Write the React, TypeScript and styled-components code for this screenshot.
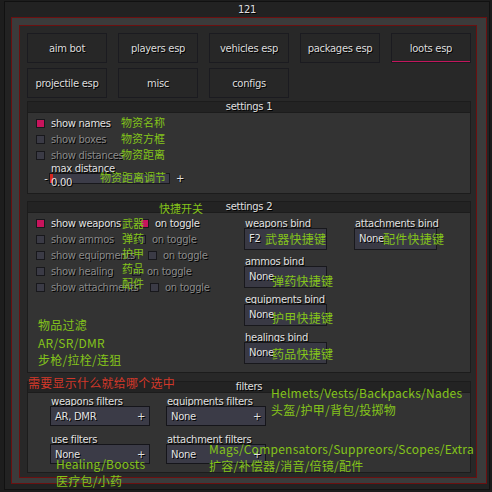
import React from "react";
import styled, { createGlobalStyle } from "styled-components";

const GREEN = "#84c41a";

const Global = createGlobalStyle`
  html, body { margin: 0; padding: 0; background: #1d1d1d; }
  body {
    font-family: "DejaVu Sans", Verdana, sans-serif;
    font-size: 10px;
    letter-spacing: -0.3px;
    color: #dedede;
  }
  * { box-sizing: border-box; }
`;

const Page = styled.div`
  position: relative;
  width: 492px;
  height: 492px;
  padding: 1px 0 0 4px;
  background: #1d1d1d;
  overflow: hidden;
`;

const Window = styled.div`
  width: 486px;
  height: 489px;
  border: 1px solid #111;
  background: #222222;
  display: flex;
  flex-direction: column;
  padding-left: 6px;
`;

const Title = styled.div`
  height: 15px;
  line-height: 15px;
  text-align: center;
  padding-right: 6px;
  color: #e0e0e0;
  text-shadow: 1px 1px 0 #000;
`;

const OuterFrame = styled.div`
  width: 476px;
  height: 467px;
  border: 1px solid #6a1010;
  background: #3b3b3b;
  padding: 7px 9px 5px 7px;
  display: flex;
`;

const InnerFrame = styled.div`
  flex: 1;
  border: 1px solid #6a1010;
  background: #282828;
  padding: 7px 5px 4px 7px;
  display: flex;
  flex-direction: column;
`;

const TabGrid = styled.div`
  display: grid;
  grid-template-columns: repeat(5, 80px);
  grid-auto-rows: 30px;
  column-gap: 11px;
  row-gap: 5px;
`;

const TabButton = styled.div<{ $active?: boolean }>`
  border: 1px solid #1b1b20;
  background: #272727;
  display: flex;
  align-items: center;
  justify-content: center;
  color: #dcdcdc;
  text-shadow: 1px 1px 0 #000;
  box-shadow: ${(p) => (p.$active ? "inset 0 -1px 0 #c3175c" : "none")};
`;

const Panel = styled.div<{ $h: number; $mt: number }>`
  height: ${(p) => p.$h}px;
  margin-top: ${(p) => p.$mt}px;
  border: 1px solid #1c1c1c;
  background: #333333;
  display: flex;
  flex-direction: column;
`;

const PanelHeader = styled.div`
  height: 11px;
  line-height: 10px;
  background: #232323;
  border-bottom: 1px solid #1c1c1c;
  text-align: center;
  color: #e0e0e0;
  text-shadow: 1px 1px 0 #000;
`;

const CheckList = styled.div<{ $pt: number }>`
  display: flex;
  flex-direction: column;
  padding: ${(p) => p.$pt}px 0 0 8px;
`;

const CheckRow = styled.div`
  height: 16px;
  display: flex;
  align-items: center;
`;

const Box = styled.span<{ $on?: boolean }>`
  width: 9px;
  height: 9px;
  flex: none;
  border: 1px solid #18181c;
  background: ${(p) => (p.$on ? "#c8145c" : "#3b3b46")};
`;

const CheckText = styled.span<{ $on?: boolean; $w?: number }>`
  margin-left: 6px;
  ${(p) => (p.$w ? `width: ${p.$w}px; flex: none;` : "")}
  white-space: nowrap;
  color: ${(p) => (p.$on ? "#e2e2e2" : "#8a8a8a")};
  text-shadow: 1px 1px 0 #000;
`;

const FieldLabel = styled.div`
  height: 8px;
  line-height: 8px;
  white-space: nowrap;
  color: #e0e0e0;
  text-shadow: 1px 1px 0 #000;
`;

const SliderBlock = styled.div`
  display: flex;
  flex-direction: column;
  padding-left: 23px;
  margin-top: 2px;
`;

const SliderRow = styled.div`
  display: flex;
  align-items: center;
  margin-left: -8px;
  height: 11px;
`;

const SliderSign = styled.span`
  width: 6px;
  text-align: center;
  color: #e0e0e0;
  text-shadow: 1px 1px 0 #000;
`;

const SliderTrack = styled.div`
  position: relative;
  width: 121px;
  height: 11px;
  border: 1px solid #18181c;
  background: #3c3c48;
`;

const SliderGrab = styled.span`
  position: absolute;
  left: 0;
  top: 0;
  width: 3px;
  height: 100%;
  background: #d8261e;
`;

const SliderValue = styled.span`
  position: absolute;
  left: 1px;
  top: 4px;
  line-height: 10px;
  color: #e2e2e2;
  text-shadow: 1px 1px 0 #000;
`;

const Plus = styled.span`
  margin-left: 6px;
  color: #e0e0e0;
  text-shadow: 1px 1px 0 #000;
`;

const Settings2Body = styled.div`
  display: flex;
`;

const LeftCol = styled.div`
  width: 216px;
  flex: none;
`;

const Toggle = styled.span`
  display: flex;
  align-items: center;
`;

const BindCol = styled.div<{ $w?: number }>`
  ${(p) => (p.$w ? `width: ${p.$w}px; flex: none;` : "")}
  display: flex;
  flex-direction: column;
  gap: 8px;
  padding-top: 7px;
`;

const BindGroup = styled.div`
  display: flex;
  flex-direction: column;
  padding-left: 1px;
`;

const BindBox = styled.div`
  width: 83px;
  height: 22px;
  margin-left: -1px;
  border: 1px solid #18181c;
  background: #393944;
  padding: 5px 0 0 4px;
  line-height: 10px;
  color: #e2e2e2;
  text-shadow: 1px 1px 0 #000;
`;

const FilterGrid = styled.div`
  display: grid;
  grid-template-columns: 100px 100px;
  column-gap: 16px;
  row-gap: 10px;
  padding: 5px 0 0 22px;
`;

const FilterGroup = styled.div`
  display: flex;
  flex-direction: column;
  padding-left: 1px;
`;

const Combo = styled.div`
  width: 100px;
  height: 20px;
  margin-left: -1px;
  border: 1px solid #15151a;
  background: #3b3b47;
  display: flex;
  align-items: center;
  justify-content: space-between;
  padding: 0 4px 0 4px;
  color: #e2e2e2;
  text-shadow: 1px 1px 0 #000;
`;

const Note = styled.div<{ $x: number; $y: number; $s?: number; $red?: boolean }>`
  position: absolute;
  left: ${(p) => p.$x}px;
  top: ${(p) => p.$y - Math.round((p.$s ?? 12) / 2)}px;
  font-family: "Noto Sans CJK SC", "Noto Sans", sans-serif;
  font-size: ${(p) => p.$s ?? 12}px;
  line-height: ${(p) => p.$s ?? 12}px;
  letter-spacing: ${(p) => ((p.$s ?? 12) === 12 ? "0.25px" : "0")};
  white-space: nowrap;
  color: ${(p) => (p.$red ? "#d2382a" : GREEN)};
`;

const tabs = [
  "aim bot",
  "players esp",
  "vehicles esp",
  "packages esp",
  "loots esp",
  "projectile esp",
  "misc",
  "configs",
];

const showRows = [
  { label: "show weapons", on: true, w: 89 },
  { label: "show ammos", on: false, w: 86 },
  { label: "show equipments", on: false, w: 97 },
  { label: "show healing", on: false, w: 81 },
  { label: "show attachments", on: false, w: 99 },
];

const notes: { t: string; x: number; y: number; s?: number; red?: boolean }[] = [
  { t: "物资名称", x: 121, y: 123, s: 11 },
  { t: "物资方框", x: 121, y: 139, s: 11 },
  { t: "物资距离", x: 121, y: 155, s: 11 },
  { t: "物资距离调节", x: 100, y: 178, s: 11 },
  { t: "快捷开关", x: 159, y: 209, s: 11 },
  { t: "武器", x: 122, y: 224, s: 11 },
  { t: "弹药", x: 122, y: 239, s: 11 },
  { t: "护甲", x: 122, y: 254, s: 11 },
  { t: "药品", x: 122, y: 269, s: 11 },
  { t: "配件", x: 122, y: 284, s: 11 },
  { t: "武器快捷键", x: 265, y: 239 },
  { t: "配件快捷键", x: 383, y: 239 },
  { t: "弹药快捷键", x: 272, y: 281 },
  { t: "护甲快捷键", x: 272, y: 318 },
  { t: "药品快捷键", x: 272, y: 354 },
  { t: "物品过滤", x: 38, y: 325 },
  { t: "AR/SR/DMR", x: 38, y: 343 },
  { t: "步枪/拉栓/连狙", x: 38, y: 360 },
  { t: "需要显示什么就给哪个选中", x: 28, y: 383, red: true },
  { t: "Helmets/Vests/Backpacks/Nades", x: 271, y: 393 },
  { t: "头盔/护甲/背包/投掷物", x: 271, y: 410 },
  { t: "Mags/Compensators/Suppreors/Scopes/Extra", x: 209, y: 449 },
  { t: "扩容/补偿器/消音/倍镜/配件", x: 209, y: 466 },
  { t: "Healing/Boosts", x: 56, y: 464 },
  { t: "医疗包/小药", x: 56, y: 481 },
];

export default function App() {
  return (
    <Page>
      <Global />
      <Window>
        <Title>121</Title>
        <OuterFrame>
          <InnerFrame>
            <TabGrid>
              {tabs.map((t) => (
                <TabButton key={t} $active={t === "loots esp"}>
                  {t}
                </TabButton>
              ))}
            </TabGrid>

            <Panel $h={93} $mt={3}>
              <PanelHeader>settings 1</PanelHeader>
              <CheckList $pt={2}>
                <CheckRow>
                  <Box $on />
                  <CheckText $on>show names</CheckText>
                </CheckRow>
                <CheckRow>
                  <Box />
                  <CheckText>show boxes</CheckText>
                </CheckRow>
                <CheckRow>
                  <Box />
                  <CheckText>show distances</CheckText>
                </CheckRow>
              </CheckList>
              <SliderBlock>
                <FieldLabel>max distance</FieldLabel>
                <SliderRow>
                  <SliderSign>-</SliderSign>
                  <SliderTrack>
                    <SliderGrab />
                    <SliderValue>0.00</SliderValue>
                  </SliderTrack>
                  <Plus>+</Plus>
                </SliderRow>
              </SliderBlock>
            </Panel>

            <Panel $h={172} $mt={7}>
              <PanelHeader>settings 2</PanelHeader>
              <Settings2Body>
                <LeftCol>
                  <CheckList $pt={2}>
                    {showRows.map((r) => (
                      <CheckRow key={r.label}>
                        <Box $on={r.on} />
                        <CheckText $on={r.on} $w={r.w}>
                          {r.label}
                        </CheckText>
                        <Toggle>
                          <Box $on={r.on} />
                          <CheckText $on={r.on}>on toggle</CheckText>
                        </Toggle>
                      </CheckRow>
                    ))}
                  </CheckList>
                </LeftCol>
                <BindCol $w={110}>
                  {[
                    ["weapons bind", "F2"],
                    ["ammos bind", "None"],
                    ["equipments bind", "None"],
                    ["healings bind", "None"],
                  ].map(([l, v]) => (
                    <BindGroup key={l}>
                      <FieldLabel>{l}</FieldLabel>
                      <BindBox>{v}</BindBox>
                    </BindGroup>
                  ))}
                </BindCol>
                <BindCol>
                  <BindGroup>
                    <FieldLabel>attachments bind</FieldLabel>
                    <BindBox>None</BindBox>
                  </BindGroup>
                </BindCol>
              </Settings2Body>
            </Panel>

            <Panel $h={92} $mt={8}>
              <PanelHeader>filters</PanelHeader>
              <FilterGrid>
                {[
                  ["weapons filters", "AR, DMR"],
                  ["equipments filters", "None"],
                  ["use filters", "None"],
                  ["attachment filters", "None"],
                ].map(([l, v]) => (
                  <FilterGroup key={l}>
                    <FieldLabel>{l}</FieldLabel>
                    <Combo>
                      <span>{v}</span>
                      <span>+</span>
                    </Combo>
                  </FilterGroup>
                ))}
              </FilterGrid>
            </Panel>
          </InnerFrame>
        </OuterFrame>
      </Window>
      {notes.map((n) => (
        <Note key={n.t} $x={n.x} $y={n.y} $s={n.s} $red={n.red}>
          {n.t}
        </Note>
      ))}
    </Page>
  );
}
